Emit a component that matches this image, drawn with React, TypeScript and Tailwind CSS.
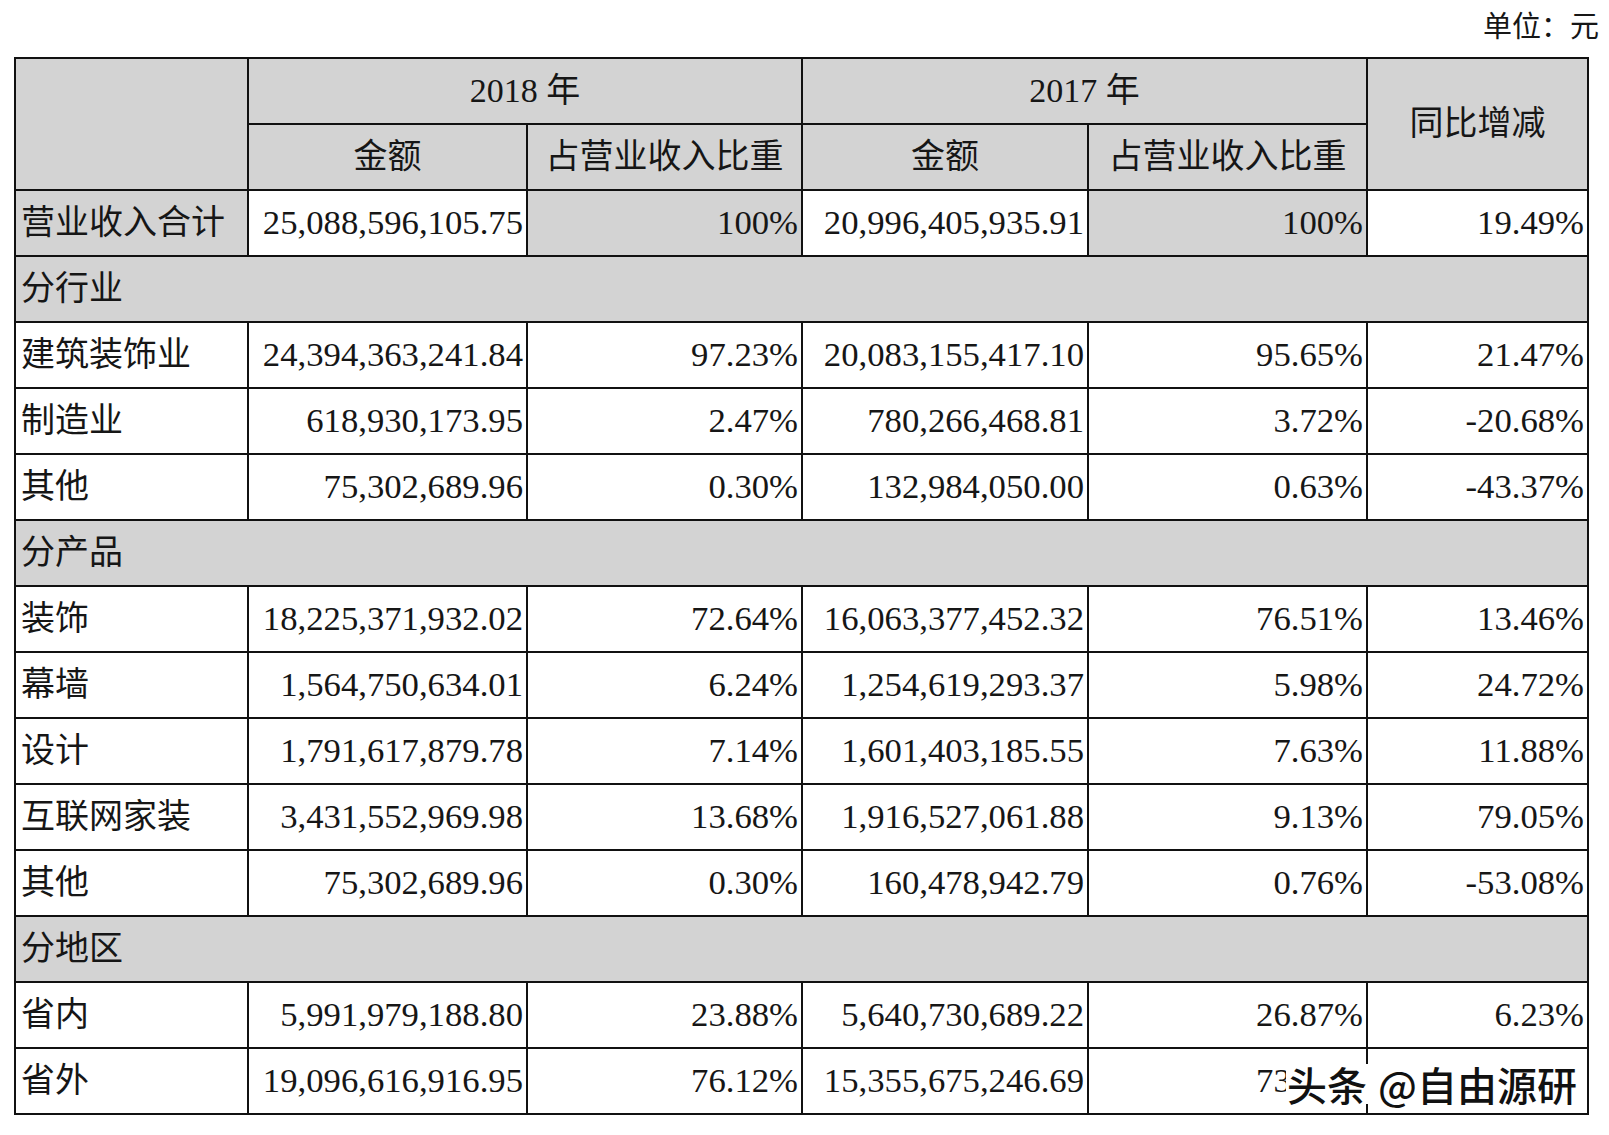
import React from 'react';

type Row = {
    label: string;
    a2018: string;
    p2018: string;
    a2017: string;
    p2017: string;
    yoy: string;
};

const sections: { title: string; rows: Row[] }[] = [
    {
        title: '分行业',
        rows: [
            { label: '建筑装饰业', a2018: '24,394,363,241.84', p2018: '97.23%', a2017: '20,083,155,417.10', p2017: '95.65%', yoy: '21.47%' },
            { label: '制造业', a2018: '618,930,173.95', p2018: '2.47%', a2017: '780,266,468.81', p2017: '3.72%', yoy: '-20.68%' },
            { label: '其他', a2018: '75,302,689.96', p2018: '0.30%', a2017: '132,984,050.00', p2017: '0.63%', yoy: '-43.37%' },
        ],
    },
    {
        title: '分产品',
        rows: [
            { label: '装饰', a2018: '18,225,371,932.02', p2018: '72.64%', a2017: '16,063,377,452.32', p2017: '76.51%', yoy: '13.46%' },
            { label: '幕墙', a2018: '1,564,750,634.01', p2018: '6.24%', a2017: '1,254,619,293.37', p2017: '5.98%', yoy: '24.72%' },
            { label: '设计', a2018: '1,791,617,879.78', p2018: '7.14%', a2017: '1,601,403,185.55', p2017: '7.63%', yoy: '11.88%' },
            { label: '互联网家装', a2018: '3,431,552,969.98', p2018: '13.68%', a2017: '1,916,527,061.88', p2017: '9.13%', yoy: '79.05%' },
            { label: '其他', a2018: '75,302,689.96', p2018: '0.30%', a2017: '160,478,942.79', p2017: '0.76%', yoy: '-53.08%' },
        ],
    },
    {
        title: '分地区',
        rows: [
            { label: '省内', a2018: '5,991,979,188.80', p2018: '23.88%', a2017: '5,640,730,689.22', p2017: '26.87%', yoy: '6.23%' },
            { label: '省外', a2018: '19,096,616,916.95', p2018: '76.12%', a2017: '15,355,675,246.69', p2017: '73.13%', yoy: '' },
        ],
    },
];

const gray = 'bg-[#d3d3d3]';
const cell = 'h-[64px] flex items-center leading-none whitespace-nowrap';
const num = `${cell} justify-end pr-[3px] text-[34.7px]`;
const lbl = `${cell} justify-start pl-[5px]`;
const head = `${cell} justify-center`;

function DataRow({ row, total }: { row: Row; total?: boolean }) {
    const alt = total ? gray : 'bg-white';
    return (
        <>
            <div className={`${lbl} ${total ? gray : 'bg-white'}`}>{row.label}</div>
            <div className={`${num} bg-white`}>{row.a2018}</div>
            <div className={`${num} ${alt}`}>{row.p2018}</div>
            <div className={`${num} bg-white`}>{row.a2017}</div>
            <div className={`${num} ${alt}`}>{row.p2017}</div>
            <div className={`${num} bg-white`}>{row.yoy}</div>
        </>
    );
}

export default function App() {
    return (
        <div
            className="w-[1609px] h-[1135px] bg-white text-[#161616] text-[34px]"
            style={{ fontFamily: '"Liberation Serif", "Noto Sans CJK SC", serif' }}
        >
            <div className="h-[57px] flex items-center justify-end pr-[10px] pb-[2px] text-[29px]">单位：元</div>

            <div className="relative ml-[14px] w-[1575px]">
                <div className="grid grid-cols-[231px_277px_273px_284px_277px_219px] gap-[2px] bg-[#111] p-[2px]">
                    {/* 表头 */}
                    <div className={`${gray} row-span-2`} />
                    <div className={`${head} ${gray} col-span-2`}>2018 年</div>
                    <div className={`${head} ${gray} col-span-2`}>2017 年</div>
                    <div className={`${gray} row-span-2 flex items-center justify-center leading-none`}>同比增减</div>
                    <div className={`${head} ${gray}`}>金额</div>
                    <div className={`${head} ${gray}`}>占营业收入比重</div>
                    <div className={`${head} ${gray}`}>金额</div>
                    <div className={`${head} ${gray}`}>占营业收入比重</div>

                    <DataRow
                        total
                        row={{ label: '营业收入合计', a2018: '25,088,596,105.75', p2018: '100%', a2017: '20,996,405,935.91', p2017: '100%', yoy: '19.49%' }}
                    />

                    {sections.map((s) => (
                        <React.Fragment key={s.title}>
                            <div className={`${lbl} ${gray} col-span-6`}>{s.title}</div>
                            {s.rows.map((r, i) => (
                                <DataRow key={i} row={r} />
                            ))}
                        </React.Fragment>
                    ))}
                </div>

                {/* 水印 */}
                <div
                    className="absolute left-[1272px] bottom-[11px] flex items-center whitespace-nowrap text-[40px] leading-none font-medium text-[#111] [text-shadow:0_0_2px_#fff,0_0_2px_#fff]"
                    style={{ fontFamily: '"Noto Sans CJK SC", sans-serif' }}
                >
                    <span className="bg-white px-[1px]">头条</span>
                    <span className="ml-[10px]">@自由源研</span>
                </div>
            </div>
        </div>
    );
}
